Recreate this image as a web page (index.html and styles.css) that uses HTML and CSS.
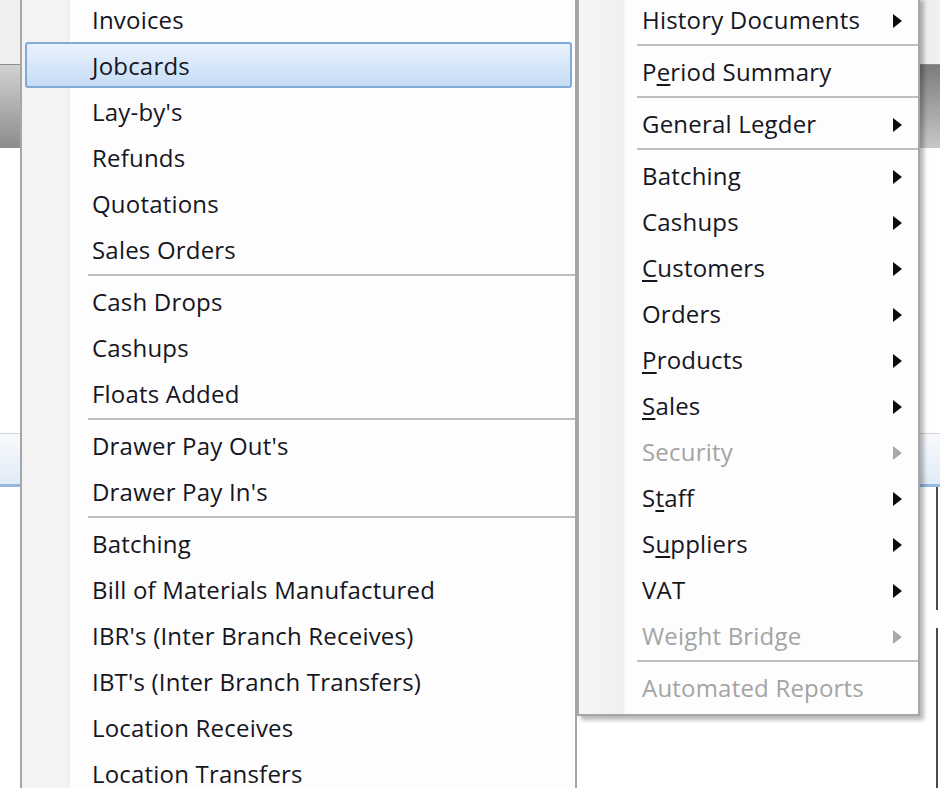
FILE: index.html
```html
<!DOCTYPE html>
<html lang="en">
<head>
    <meta charset="UTF-8">
    <title>Reports Menu</title>
    <link rel="stylesheet" href="styles.css">
</head>
<body>

    <div class="screen">
        <div class="titlebar"></div>
        <div class="toolbar">
            <div class="tool tool-left"></div>
            <div class="tool tool-mid"></div>
            <div class="tool tool-right"></div>
        </div>
        <div class="workspace"></div>
        <div class="tabstrip"></div>
        <div class="lower">
            <div class="panel panel-top"></div>
            <div class="panel panel-bottom"></div>
        </div>
    </div>

    <!-- main drop-down -->
    <div class="menu menu-main">
        <div class="item">Invoices</div>
        <div class="item hover">Jobcards</div>
        <div class="item">Lay-by's</div>
        <div class="item">Refunds</div>
        <div class="item">Quotations</div>
        <div class="item">Sales Orders</div>
        <div class="sep"></div>
        <div class="item">Cash Drops</div>
        <div class="item">Cashups</div>
        <div class="item">Floats Added</div>
        <div class="sep"></div>
        <div class="item">Drawer Pay Out's</div>
        <div class="item">Drawer Pay In's</div>
        <div class="sep"></div>
        <div class="item">Batching</div>
        <div class="item">Bill of Materials Manufactured</div>
        <div class="item">IBR's (Inter Branch Receives)</div>
        <div class="item">IBT's (Inter Branch Transfers)</div>
        <div class="item">Location Receives</div>
        <div class="item">Location Transfers</div>
    </div>

    <!-- reports sub menu -->
    <div class="menu menu-sub">
        <div class="item sub">History Documents</div>
        <div class="sep"></div>
        <div class="item">P<u>e</u>riod Summary</div>
        <div class="sep"></div>
        <div class="item sub">General Legder</div>
        <div class="sep"></div>
        <div class="item sub">Batching</div>
        <div class="item sub">Cashups</div>
        <div class="item sub"><u>C</u>ustomers</div>
        <div class="item sub">Orders</div>
        <div class="item sub"><u>P</u>roducts</div>
        <div class="item sub"><u>S</u>ales</div>
        <div class="item sub disabled">Security</div>
        <div class="item sub">S<u>t</u>aff</div>
        <div class="item sub">S<u>u</u>ppliers</div>
        <div class="item sub">VAT</div>
        <div class="item sub disabled">Weight Bridge</div>
        <div class="sep"></div>
        <div class="item disabled">Automated Reports</div>
    </div>

</body>
</html>
```

FILE: styles.css
```css
body {
    margin: 0;
    width: 940px;
    height: 788px;
    overflow: hidden;
    position: relative;
    background: #fff;
    font-family: "Open Sans", "Segoe UI", sans-serif;
    color: #16161f;
}

/* window behind the menus */
.titlebar { height: 65px; background: #efefef; border-bottom: 1px solid #8e8e8e; box-sizing: border-box; }
.toolbar { height: 83px; display: flex; }
.tool-left { width: 20px; background: linear-gradient(#d2d2d2, #8c8c8c); }
.tool-mid { flex: 1; background: #b8b8b8; }
.tool-right { width: 20px; background: linear-gradient(#7c7c7c, #c8c8c8); }
.workspace { height: 285px; }
.tabstrip {
    height: 54px;
    box-sizing: border-box;
    border-top: 1px solid #d4d4d4;
    border-bottom: 3px solid #93b7df;
    background: linear-gradient(#f8fafd, #e1ebf6);
}
.lower { display: flex; flex-direction: column; gap: 18px; }
.panel { width: 936px; border-right: 2px solid #4a4a4a; }
.panel-top { height: 123px; }
.panel-bottom { height: 170px; }

/* menus */
.menu {
    position: absolute;
    top: -4px;
    font-size: 24px;
    letter-spacing: 0.2px;
    background-color: #fcfcfc;
}
.menu-main {
    left: 20px;
    width: 553px;
    border-left: 2px solid #a6a6a6;
    border-right: 2px solid #a6a6a6;
    background-image: linear-gradient(to right, #f3f3f3 0, #f3f3f3 46px, #ececec 46px, #ececec 47px, #fdfdfd 48px);
}
.menu-sub {
    left: 577px;
    width: 339px;
    padding-bottom: 4px;
    border: 2px solid #a6a6a6;
    border-top: none;
    box-shadow: 4px 4px 4px rgba(0, 0, 0, 0.28);
    background-image: linear-gradient(to right, #f6f6f6 0, #f0f0f0 40px, #eeeeee 44px, #fdfdfd 46px);
}

.item {
    height: 46px;
    display: flex;
    align-items: center;
    white-space: nowrap;
}
.menu-main .item { padding-left: 70px; }
.menu-sub .item { padding-left: 63px; padding-right: 16px; }

.item u { text-decoration-thickness: 2px; text-underline-offset: 3px; }

.item.hover {
    margin: 0 3px;
    padding-left: 65px;
    box-sizing: border-box;
    border: 2px solid #82aad9;
    border-radius: 3px;
    background: linear-gradient(#e9f2fc, #c6ddf6);
}

.item.sub::after {
    content: "";
    margin-left: auto;
    margin-top: 3px;
    border-left: 9px solid #0c0c0c;
    border-top: 7px solid transparent;
    border-bottom: 7px solid transparent;
}

.item.disabled { color: #a4a4a4; }
.item.sub.disabled::after { border-left-color: #a9a9a9; }

.sep {
    height: 6px;
    box-sizing: border-box;
    padding-top: 2px;
}
.sep::before {
    content: "";
    display: block;
    height: 2px;
    background: #bdbdbd;
}
.menu-main .sep { margin-left: 66px; }
.menu-sub .sep { margin-left: 58px; }
```
